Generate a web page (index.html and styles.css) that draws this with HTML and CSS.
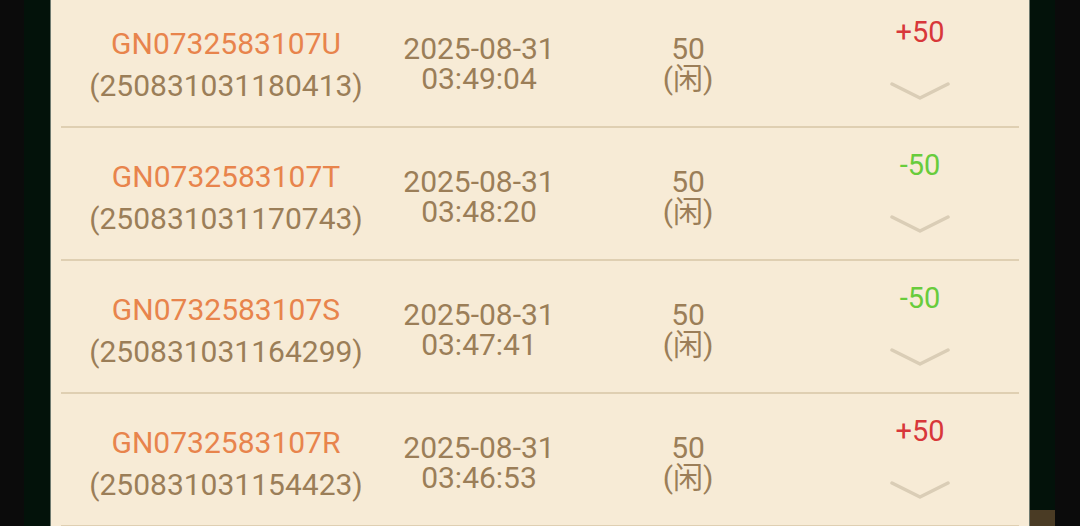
FILE: index.html
```html
<!DOCTYPE html>
<html>
<head>
<meta charset="utf-8">
<link rel="stylesheet" href="styles.css">
</head>
<body>
<div class="frame">
  <div class="black"></div>
  <div class="green"></div>
  <div class="edge"></div>
  <div class="card">
    <div class="list">
      <div class="row">
        <div class="c-order"><div class="gn">GN0732583107U</div><div class="num">(250831031180413)</div></div>
        <div class="c-date"><div>2025-08-31</div><div>03:49:04</div></div>
        <div class="c-amt"><div>50</div><div>(闲)</div></div>
        <div class="c-res"><div class="win">+50</div><svg class="chev" width="60" height="20" viewBox="0 0 60 20"><polyline points="2,3 30,17 58,3" fill="none" stroke="#dacdb6" stroke-width="3.5" stroke-linecap="round" stroke-linejoin="round"/></svg></div>
      </div>
      <div class="row">
        <div class="c-order"><div class="gn">GN0732583107T</div><div class="num">(250831031170743)</div></div>
        <div class="c-date"><div>2025-08-31</div><div>03:48:20</div></div>
        <div class="c-amt"><div>50</div><div>(闲)</div></div>
        <div class="c-res"><div class="lose">-50</div><svg class="chev" width="60" height="20" viewBox="0 0 60 20"><polyline points="2,3 30,17 58,3" fill="none" stroke="#dacdb6" stroke-width="3.5" stroke-linecap="round" stroke-linejoin="round"/></svg></div>
      </div>
      <div class="row">
        <div class="c-order"><div class="gn">GN0732583107S</div><div class="num">(250831031164299)</div></div>
        <div class="c-date"><div>2025-08-31</div><div>03:47:41</div></div>
        <div class="c-amt"><div>50</div><div>(闲)</div></div>
        <div class="c-res"><div class="lose">-50</div><svg class="chev" width="60" height="20" viewBox="0 0 60 20"><polyline points="2,3 30,17 58,3" fill="none" stroke="#dacdb6" stroke-width="3.5" stroke-linecap="round" stroke-linejoin="round"/></svg></div>
      </div>
      <div class="row">
        <div class="c-order"><div class="gn">GN0732583107R</div><div class="num">(250831031154423)</div></div>
        <div class="c-date"><div>2025-08-31</div><div>03:46:53</div></div>
        <div class="c-amt"><div>50</div><div>(闲)</div></div>
        <div class="c-res"><div class="win">+50</div><svg class="chev" width="60" height="20" viewBox="0 0 60 20"><polyline points="2,3 30,17 58,3" fill="none" stroke="#dacdb6" stroke-width="3.5" stroke-linecap="round" stroke-linejoin="round"/></svg></div>
      </div>
    </div>
  </div>
  <div class="edge"></div>
  <div class="green green-r"><div class="spacer"></div><div class="brown"></div></div>
  <div class="black"></div>
</div>
</body>
</html>
```

FILE: styles.css
```css
html, body {
  margin: 0;
  padding: 0;
  height: 526px;
  overflow: hidden;
  background: #0a0a0a;
}
.frame {
  display: flex;
  height: 526px;
  font-family: Roboto, "Noto Sans CJK SC", sans-serif;
}
.black { width: 24px; background: #0b0b0b; flex: none; }
.black:last-child { width: 25px; }
.green { width: 26px; background: #03120a; flex: none; }
.green-r { width: 25px; display: flex; flex-direction: column; }
.spacer { flex: 1; }
.brown { height: 16px; background: #4a3b24; }
.edge { width: 1px; background: #6f7a70; flex: none; }
.card {
  width: 978px;
  flex: none;
  background: #f7ebd6;
  overflow: hidden;
}
.list {
  margin-top: -5px;
  padding: 0 10px;
}
.row {
  display: grid;
  grid-template-columns: 330px 176px 242px 1fr;
  height: 131px;
  border-bottom: 2px solid #dfcfb2;
  font-size: 30px;
  color: #9b7e58;
  text-align: center;
  box-sizing: content-box;
}
.c-order {
  padding-top: 28px;
  line-height: 42px;
}
.gn { color: #e8844c; }
.c-date, .c-amt {
  padding-top: 39px;
  line-height: 30px;
}
.c-res {
  padding-top: 22px;
  padding-left: 12px;
  display: flex;
  flex-direction: column;
  align-items: center;
  line-height: 30px;
  font-size: 29px;
}
.win { color: #d8373a; }
.lose { color: #68cc3c; }
.chev {
  display: block;
  margin-top: 34px;
}
```
